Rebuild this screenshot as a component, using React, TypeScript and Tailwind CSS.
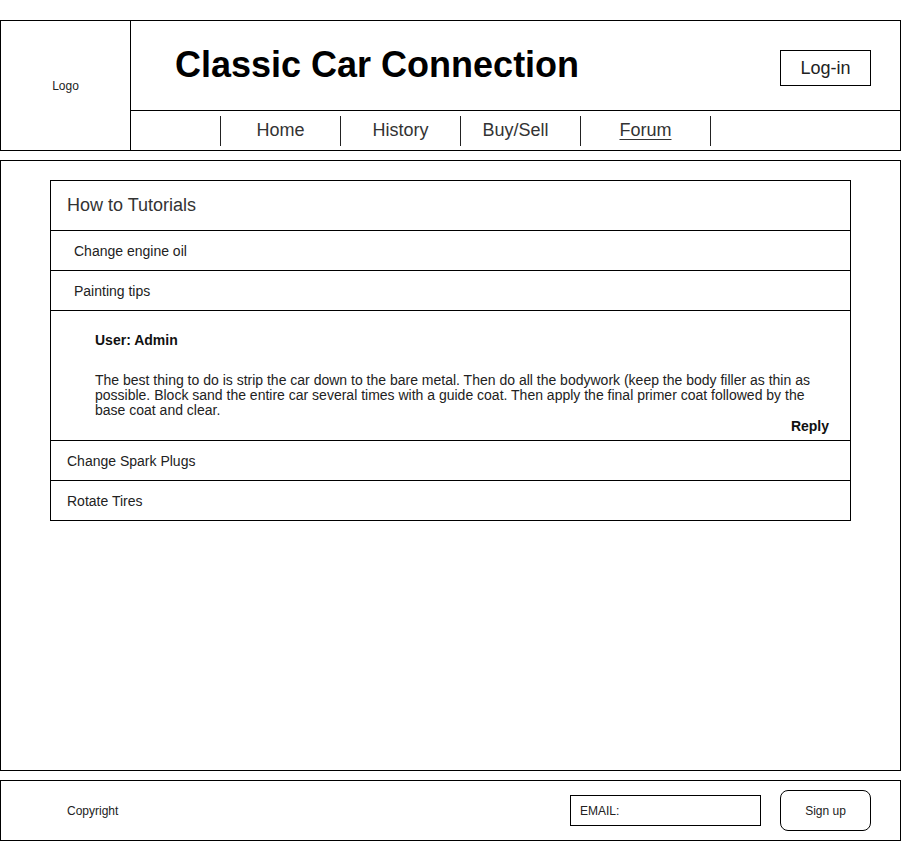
import React from "react";

const font = { fontFamily: '"Liberation Sans", Arial, sans-serif' };

export default function App() {
  return (
    <div className="w-[901px] h-[841px] bg-white pt-[20px] flex flex-col gap-[9px] text-black" style={font}>
      {/* Header */}
      <div className="h-[131px] border border-black flex">
        <div className="w-[130px] border-r border-black flex items-center justify-center text-[12px] text-[#222]">
          Logo
        </div>
        <div className="flex-1 flex flex-col">
          <div className="h-[90px] border-b border-black flex items-start">
            <h1 className="ml-[44px] mt-[22px] text-[36px] leading-[44px] font-bold text-black">Classic Car Connection</h1>
            <div className="ml-auto mr-[29px] mt-[29px] w-[91px] h-[36px] border border-black flex items-center justify-center text-[18px] text-[#222]">
              Log-in
            </div>
          </div>
          <div className="h-[39px] flex items-center pl-[89px]">
            <div className="w-[120px] h-[30px] border-l border-[#222] flex items-center justify-center text-[18px] text-[#333]">Home</div>
            <div className="w-[120px] h-[30px] border-l border-[#222] flex items-center justify-center text-[18px] text-[#333]">History</div>
            <div className="w-[120px] h-[30px] border-l border-[#222] flex items-center justify-center pr-[10px] text-[18px] text-[#333]">Buy/Sell</div>
            <div className="w-[130px] h-[30px] border-l border-[#222] flex items-center justify-center text-[18px] text-[#333]">
              <span className="underline underline-offset-[3px]">Forum</span>
            </div>
            <div className="w-[1px] h-[30px] border-l border-[#222]" />
          </div>
        </div>
      </div>

      {/* Main */}
      <div className="h-[611px] border border-black pt-[19px] pl-[49px]">
        <div className="w-[801px] border border-black">
          <div className="h-[50px] border-b border-black flex items-center pl-[16px] text-[18px] text-[#333]">How to Tutorials</div>
          <div className="h-[40px] border-b border-black flex items-center pl-[23px] pt-[2px] text-[14px] text-[#222]">Change engine oil</div>
          <div className="h-[40px] border-b border-black flex items-center pl-[23px] pt-[2px] text-[14px] text-[#222]">Painting tips</div>
          <div className="h-[130px] border-b border-black pl-[44px] pr-[21px] pt-[22px] text-[14px] leading-[15px] text-[#111]">
            <div className="font-bold">User: Admin</div>
            <p className="mt-[25px] text-[#222]">
              The best thing to do is strip the car down to the bare metal. Then do all the bodywork (keep the body filler as thin as possible. Block sand the entire car several times with a guide coat. Then apply the final primer coat followed by the base coat and clear.
            </p>
            <div className="mt-[1px] text-right font-bold">Reply</div>
          </div>
          <div className="h-[40px] border-b border-black flex items-center pl-[16px] pt-[2px] text-[14px] text-[#222]">Change Spark Plugs</div>
          <div className="h-[39px] flex items-center pl-[16px] pt-[2px] text-[14px] text-[#222]">Rotate Tires</div>
        </div>
      </div>

      {/* Footer */}
      <div className="h-[61px] border border-black flex items-center">
        <div className="ml-[66px] text-[12px] text-[#222]">Copyright</div>
        <div className="ml-auto w-[191px] h-[31px] border border-black flex items-center pl-[9px] text-[12px] text-[#222]">EMAIL:</div>
        <div className="ml-[19px] mr-[29px] w-[91px] h-[41px] border border-black rounded-[8px] flex items-center justify-center text-[12px] text-[#222]">
          Sign up
        </div>
      </div>
    </div>
  );
}
